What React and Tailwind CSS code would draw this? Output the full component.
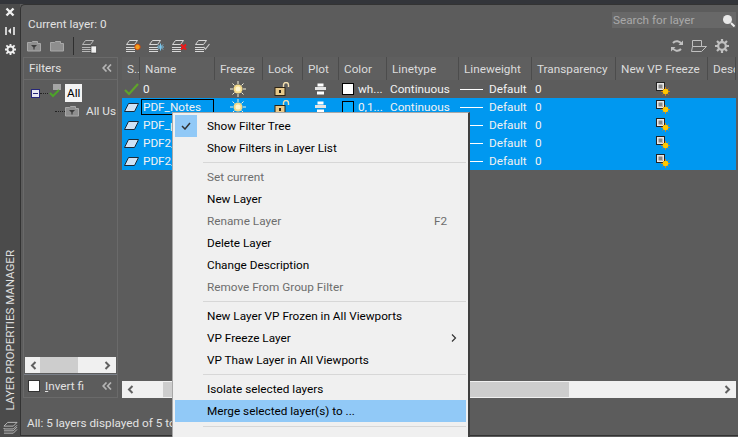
import React from 'react';

const font = { fontFamily: 'Roboto, "Noto Sans", sans-serif' };

const Stack = ({ color = '#d8d8d8' }) => (
  <g fill="none" stroke={color} strokeWidth="1">
    <path d="M4.5 1.5h8l-3 4h-8z" />
    <path d="M1 8.5h9M1 10.5h9M1 12.5h9" />
  </g>
);

const Sun = ({ className = 'w-4 h-4' }) => (
  <svg viewBox="0 0 16 16" className={className}>
    <g stroke="#f4f0d8" strokeWidth="1">
      <path d="M8 0v3M8 13v3M0 8h3M13 8h3M2.5 2.5l2 2M11.5 11.5l2 2M13.5 2.5l-2 2M4.5 11.5l-2 2" />
    </g>
    <circle cx="8" cy="8" r="4.5" fill="#f6dc8c" />
    <circle cx="8" cy="8" r="2.5" fill="#fff6d0" />
  </svg>
);

const Lock = () => (
  <svg viewBox="0 0 17 14" className="w-[17px] h-[14px]">
    <path d="M9.5 5V3a2.5 2.5 0 0 1 5 0v2" fill="none" stroke="#f3dfb0" strokeWidth="1.4" />
    <rect x="1" y="5.5" width="10" height="8" fill="#e8c98a" stroke="#2e2414" />
    <rect x="5" y="8" width="2" height="3" fill="#2e2414" />
  </svg>
);

const Printer = () => (
  <svg viewBox="0 0 11 12" className="w-[11px] h-3">
    <rect x="2.5" y="0.5" width="6" height="3" fill="#fff" />
    <rect x="0" y="4" width="11" height="3" fill="#e4e4e4" />
    <rect x="2" y="8.5" width="7" height="3" fill="#fff" />
  </svg>
);

const LayerIcon = () => (
  <svg viewBox="0 0 15 9" className="w-[15px] h-[9px]">
    <path d="M4.5 0.5h10l-4 8h-10z" fill="#cfe3f6" stroke="#1c2a38" />
  </svg>
);

const VpIcon = () => (
  <svg viewBox="0 0 14 14" className="w-[14px] h-[14px]">
    <rect x="0.5" y="0.5" width="8" height="8" fill="#e8e8e8" stroke="#222" />
    <rect x="2.5" y="2.5" width="4" height="4" fill="#888" />
    <path d="M9.5 5v9M5 9.5h9M6.5 6.5l6 6M12.5 6.5l-6 6" stroke="#f08000" strokeWidth="0.8" />
    <circle cx="9.5" cy="9.5" r="2.8" fill="#ffc800" />
  </svg>
);

const Folder = ({ funnel }) => (
  <svg viewBox="0 0 14 12" className="w-[14px] h-3 shrink-0">
    <path d="M0.5 2.5h4l1-1h5v2h3v7.5h-13z" fill="#8e8e8e" stroke="#a8a8a8" />
    {funnel && <path d="M4 5h6l-2.4 2.4v2h-1.2v-2z" fill="#3c3c3c" />}
  </svg>
);

const Collapse = () => (
  <svg viewBox="0 0 10 8" className="w-[10px] h-2 ml-auto mr-[5px] shrink-0">
    <path d="M4.5 0.5L1.2 4l3.3 3.5M9 0.5L5.7 4 9 7.5" fill="none" stroke="#b4b4b4" strokeWidth="1.7" />
  </svg>
);

const Header = ({ children }) => (
  <div className="bg-[#5f5f5f] border-r border-[#4c4c4c] h-[23px] flex items-center pl-[5px] pt-[1px] overflow-hidden whitespace-nowrap text-[#dcdcdc]">
    {children}
  </div>
);

const Row = ({ first, name, outlined, swatch, colorName }) => (
  <div className={`col-span-11 grid grid-cols-subgrid h-[18px] items-center whitespace-nowrap text-[#f2f2f2] ${first ? '' : 'bg-[#0098f0]'}`}>
    <div className="flex justify-center">
      {first ? (
        <svg viewBox="0 0 15 13" className="w-[15px] h-[13px]">
          <path d="M1 7l4 4 9-10" fill="none" stroke="#5fa32a" strokeWidth="2.2" />
        </svg>
      ) : (
        <LayerIcon />
      )}
    </div>
    <div className={`h-[16px] ml-px mr-[1px] flex items-center pl-[1px] border ${outlined ? 'border-black' : 'border-transparent'}`}>{name}</div>
    <div className="flex justify-center -ml-[2px]"><Sun /></div>
    <div className="flex justify-center -ml-[2px]"><Lock /></div>
    <div className="flex justify-center -ml-[2px]"><Printer /></div>
    <div className="flex items-center gap-[4px] pl-[3px]">
      <span className="w-[12px] h-[12px] border border-black shrink-0" style={{ background: swatch }} />
      <span>{colorName}</span>
    </div>
    <div className="pl-[3px]">Continuous</div>
    <div className="flex items-center gap-[6px] pl-[1px]">
      <span className="w-[23px] h-px bg-white" />
      <span>Default</span>
    </div>
    <div className="pl-[3px]">0</div>
    <div className="flex justify-center ml-[1px]"><VpIcon /></div>
    <div />
  </div>
);

const MenuItem = ({ label, disabled, shortcut, arrow, active, checked }) => (
  <div className={`h-[22px] flex items-center relative ${active ? 'bg-[#91c9f7]' : ''}`}>
    <div className={`w-[22px] h-[22px] flex items-center justify-center shrink-0 ${checked ? 'bg-[#91c9f7]' : ''}`}>
      {checked && (
        <svg viewBox="0 0 10 8" className="w-[10px] h-2">
          <path d="M1 4l3 3 5-6" fill="none" stroke="#333" strokeWidth="1.5" />
        </svg>
      )}
    </div>
    <span className={`ml-[10px] whitespace-nowrap ${disabled ? 'text-[#6d6d6d]' : 'text-black'}`}>{label}</span>
    {shortcut && <span className="ml-auto mr-[19px] text-[#6d6d6d]">{shortcut}</span>}
    {arrow && (
      <svg viewBox="0 0 6 8" className="w-[6px] h-2 ml-auto mr-[9px]">
        <path d="M1 0.5L4.5 4 1 7.5" fill="none" stroke="#333" strokeWidth="1.2" />
      </svg>
    )}
  </div>
);

const Separator = ({ h = 'h-[7px]' }) => (
  <div className={`${h} flex items-center ml-[28px]`}>
    <div className="h-px w-full bg-[#d7d7d7]" />
  </div>
);

const ScrollArrow = ({ left }) => (
  <svg viewBox="0 0 7 9" className="w-[7px] h-[9px]">
    <path d={left ? 'M5.5 1L2 4.5 5.5 8' : 'M1.5 1L5 4.5 1.5 8'} fill="none" stroke="#606060" strokeWidth="2" />
  </svg>
);

const ToolStack = ({ children }) => (
  <svg viewBox="0 0 16 15" className="w-4 h-[15px]">
    <Stack />
    {children}
  </svg>
);

export default function App() {
  return (
    <div className="w-[738px] h-[437px] overflow-hidden flex flex-col bg-[#5c5c5c] relative text-[11.75px] leading-[14px]" style={font}>
      <div className="h-[4px] bg-[#33353a] shrink-0" />
      <div className="flex flex-1 min-h-0">
        {/* rail */}
        <div className="w-[20px] flex flex-col items-center pt-[3px] shrink-0 bg-[#4b4b4b]">
          <svg viewBox="0 0 10 10" className="w-[10px] h-[10px]">
            <path d="M1.5 1.5l7 7M8.5 1.5l-7 7" stroke="#f0f0f0" strokeWidth="2.4" />
          </svg>
          <svg viewBox="0 0 10 10" className="w-[10px] h-[10px] mt-[9px]">
            <path d="M1 1v8M9 1v8" stroke="#f0f0f0" strokeWidth="1.6" />
            <path d="M3 5l3-3v6z" fill="#f0f0f0" />
          </svg>
          <svg viewBox="0 0 12 12" className="w-[11px] h-[11px] mt-[8px]">
            <circle cx="6" cy="6" r="3.3" fill="none" stroke="#f0f0f0" strokeWidth="2" />
            <path d="M6 0v3M6 9v3M0 6h3M9 6h3M1.5 1.5l2 2M8.5 8.5l2 2M10.5 1.5l-2 2M3.5 8.5l-2 2" stroke="#f0f0f0" strokeWidth="2" />
          </svg>
          <div className="mt-auto text-[#e0e0e0] text-[11.5px] whitespace-nowrap [writing-mode:vertical-rl] rotate-180 mb-[11px]">
            LAYER PROPERTIES MANAGER
          </div>
          <svg viewBox="0 0 16 14" className="w-[15px] h-[14px] mb-[2px]">
            <path d="M5 1h10l-4 4H1zM1 7l-0 1h10l4-4M1 10h10l4-4M1 12.5h10l4-4" fill="none" stroke="#c8c8c8" strokeWidth="0.9" />
          </svg>
        </div>

        {/* panel */}
        <div className="flex-1 min-w-0 flex flex-col rounded-tl-[5px] border-t border-l border-[#333] bg-[#5c5c5c] border-b mb-[1px] relative">
          <div className="h-[33px] flex shrink-0">
            <div className="pl-[7px] pt-[12px] text-[#e2e2e2]">Current layer: 0</div>
            <div className="ml-auto mt-[7px] w-[124px] h-[16px] mr-[2px] bg-[#686868] flex items-center pl-[1px] text-[#a8a8a8]">
              Search for layer
              <svg viewBox="0 0 13 13" className="w-[13px] h-[13px] ml-auto mr-[1px]">
                <circle cx="5.5" cy="5.5" r="4.5" fill="#e8e8e8" />
                <path d="M9 9l3.5 3.5" stroke="#eee" strokeWidth="2" />
              </svg>
            </div>
          </div>

          {/* toolbar */}
          <div className="h-[16px] flex items-center shrink-0 pl-[6px]">
            <div className="flex items-center gap-[9px]">
              <Folder funnel />
              <Folder />
            </div>
            <div className="w-px h-[18px] bg-[#2f2f2f] ml-[9px] mr-[7px]" />
            <svg viewBox="0 0 16 15" className="w-4 h-[15px]">
              <Stack color="#b8b8b8" />
              <rect x="10" y="7" width="5.5" height="7" fill="#f0f0f0" stroke="#333" strokeWidth="0.6" />
            </svg>
            <div className="ml-[28px] flex items-center gap-[7px]">
              <ToolStack>
                <circle cx="12.5" cy="8" r="2.7" fill="#f0a020" stroke="#e04000" strokeWidth="0.8" />
              </ToolStack>
              <ToolStack>
                <path d="M12.5 4.5v7M9 8h7M10 5.5l5 5M15 5.5l-5 5" stroke="#7cc8ee" strokeWidth="1" />
              </ToolStack>
              <ToolStack>
                <path d="M10 5.5l5 5M15 5.5l-5 5" stroke="#f01818" strokeWidth="2" />
              </ToolStack>
              <ToolStack>
                <path d="M9.5 8l2 2 4-5" fill="none" stroke="#c8c8c8" strokeWidth="1.2" />
              </ToolStack>
            </div>
            <div className="ml-auto flex items-center gap-[8px] mr-[9px]">
              <svg viewBox="0 0 12 12" className="w-3 h-3">
                <path d="M10.5 4.5A5 5 0 0 0 2 3M1.5 7.5A5 5 0 0 0 10 9" fill="none" stroke="#c0c0c0" strokeWidth="2" />
                <path d="M7.5 5H12V0.5zM4.5 7H0v4.5z" fill="#c0c0c0" />
              </svg>
              <svg viewBox="0 0 16 12" className="w-4 h-3">
                <path d="M1.5 0.5h9v6h-9zM1.5 6.5l-1 5h10l5-5h-5" fill="none" stroke="#c0c0c0" />
              </svg>
              <svg viewBox="0 0 14 14" className="w-[14px] h-[14px]">
                <circle cx="7" cy="7" r="3.8" fill="none" stroke="#c0c0c0" strokeWidth="2.2" />
                <path d="M7 0v3M7 11v3M0 7h3M11 7h3M2 2l2 2M10 10l2 2M12 2l-2 2M4 10l-2 2" stroke="#c0c0c0" strokeWidth="2.2" />
              </svg>
            </div>
          </div>

          {/* body */}
          <div className="flex pl-[2px] mt-[3px] pr-[1px] h-[341px] shrink-0">
            {/* filters */}
            <div className="w-[95px] shrink-0 border border-[#6a6a6a] flex flex-col text-[#e2e2e2]">
              <div className="h-[22px] flex items-center border-b border-[#6a6a6a] pl-[5px] pb-[2px] shrink-0">
                Filters
                <Collapse />
              </div>
              <div className="flex-1 min-h-0 relative border-b border-[#7a7f88] flex flex-col justify-end">
                <div className="absolute left-[7px] top-[4px] w-[85px] overflow-hidden">
                  <div className="flex items-center h-[18px]">
                    <span className="w-[9px] h-[9px] bg-[#e8e8f0] border border-[#26267a] flex items-center justify-center shrink-0">
                      <span className="w-[5px] h-px bg-[#26267a]" />
                    </span>
                    <span className="w-[8px] border-t border-dotted border-[#222] shrink-0" />
                    <svg viewBox="0 0 16 16" className="w-[16px] h-4 shrink-0 -mt-[2px]">
                      <path d="M5 1h8M5 3h8M5 5h8" stroke="#eee" />
                      <path d="M2 9l3 3 6-6" fill="none" stroke="#4da32a" strokeWidth="2" />
                    </svg>
                    <span className="bg-[#f4f4f4] text-black h-[18px] px-[2px] flex items-center ml-[1px]">All</span>
                  </div>
                  <div className="flex items-center h-[16px] pl-[24px] mt-[1px] whitespace-nowrap">
                    <span className="w-[10px] border-t border-dotted border-[#222] shrink-0" />
                    <Folder funnel />
                    <span className="ml-[7px]">All Us</span>
                  </div>
                </div>
                <div className="h-[16px] mx-px mb-px bg-[#f0f0f0] flex items-center justify-between px-[5px] relative">
                  <ScrollArrow left />
                  <div className="absolute left-[15px] w-[38px] h-[16px] bg-[#cdcdcd]" />
                  <ScrollArrow />
                </div>
              </div>
              <div className="h-[22px] flex items-center pl-[4px] shrink-0 overflow-hidden whitespace-nowrap">
                <span className="w-[12px] h-[12px] bg-white border border-[#333] mr-[5px] shrink-0" />
                <span><span className="underline">I</span>nvert fi</span>
                <Collapse />
              </div>
            </div>

            {/* table */}
            <div className="flex-1 min-w-0 ml-[4px] flex flex-col">
              <div className="grid grid-cols-[18px_75px_48px_40px_36px_48px_72px_73px_84px_92px_28px] overflow-hidden">
                <Header>S..</Header>
                <Header>Name</Header>
                <Header>Freeze</Header>
                <Header>Lock</Header>
                <Header>Plot</Header>
                <Header>Color</Header>
                <Header>Linetype</Header>
                <Header>Lineweight</Header>
                <Header>Transparency</Header>
                <Header>New VP Freeze</Header>
                <Header>Desc</Header>
                <Row first name="0" swatch="#fff" colorName="wh..." />
                <Row outlined name="PDF_Notes" swatch="#00aaff" colorName="0,1..." />
                <Row name="PDF_p" swatch="#00aaff" colorName="0,1..." />
                <Row name="PDF2_" swatch="#00aaff" colorName="0,1..." />
                <Row name="PDF2_" swatch="#00aaff" colorName="0,1..." />
              </div>
              <div className="mt-auto h-[17px] bg-[#f0f0f0] flex items-center justify-between px-[5px] relative mr-[1px]">
                <ScrollArrow left />
                <div className="absolute left-[41px] w-[406px] h-[15px] bg-[#cdcdcd]" />
                <ScrollArrow />
              </div>
            </div>
          </div>

          <div className="pl-[6px] mt-[18px] text-[#e2e2e2] whitespace-nowrap">All: 5 layers displayed of 5 total layers</div>
        </div>
      </div>

      {/* context menu */}
      <div className="absolute left-[172px] top-[112px] w-[298px] bg-[#f0f0f0] border-l border-t border-[#a8a8a8] border-r-2 border-r-[#3f3f3f] pt-[2px] pl-[2px] pr-[2px]">
        <MenuItem checked label="Show Filter Tree" />
        <MenuItem label="Show Filters in Layer List" />
        <Separator />
        <MenuItem disabled label="Set current" />
        <MenuItem label="New Layer" />
        <MenuItem disabled label="Rename Layer" shortcut="F2" />
        <MenuItem label="Delete Layer" />
        <MenuItem label="Change Description" />
        <MenuItem disabled label="Remove From Group Filter" />
        <Separator />
        <MenuItem label="New Layer VP Frozen in All Viewports" />
        <MenuItem label="VP Freeze Layer" arrow />
        <MenuItem label="VP Thaw Layer in All Viewports" />
        <Separator />
        <MenuItem label="Isolate selected layers" />
        <MenuItem active label="Merge selected layer(s) to ..." />
        <Separator h="h-[9px]" />
        <MenuItem label="Select All" />
      </div>
    </div>
  );
}
